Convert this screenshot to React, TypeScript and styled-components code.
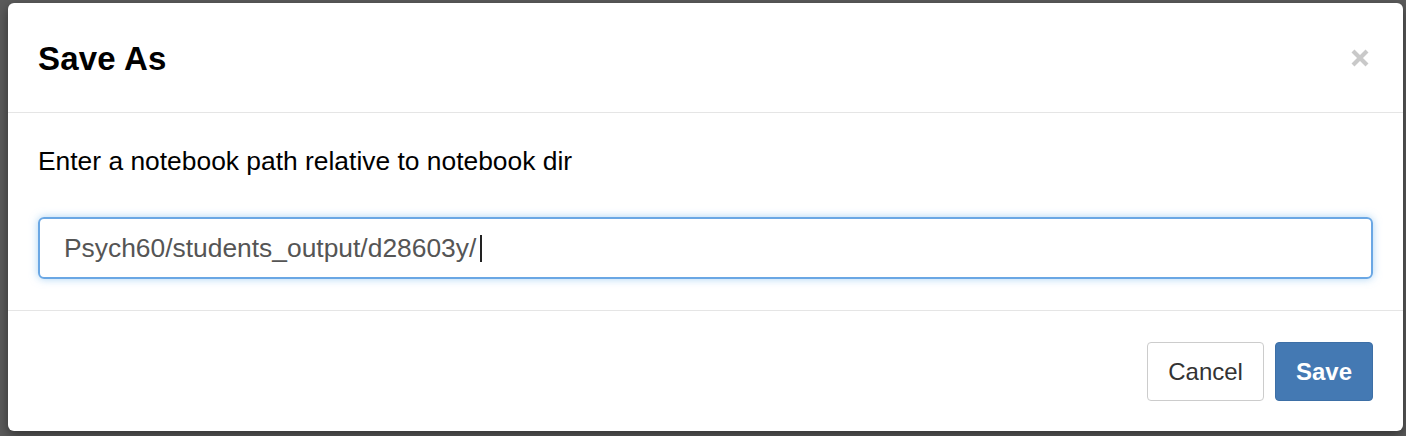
import React from "react";
import styled, { createGlobalStyle } from "styled-components";

const Global = createGlobalStyle`
  html, body {
    margin: 0;
    padding: 0;
    width: 1406px;
    height: 436px;
    overflow: hidden;
    background: #5b5b5b;
    font-family: "Liberation Sans", Arial, Helvetica, sans-serif;
  }
`;

const Backdrop = styled.div`
  width: 1406px;
  height: 436px;
  display: flex;
  align-items: flex-start;
  padding: 3px 0 0 8px;
  box-sizing: border-box;
  background: #5b5b5b;
`;

const Modal = styled.div`
  width: 1395px;
  height: 428px;
  background: #fff;
  border-radius: 6px;
  box-shadow: 0 4px 12px rgba(0, 0, 0, 0.45);
  display: flex;
  flex-direction: column;
  overflow: hidden;
`;

const Header = styled.div`
  height: 109px;
  padding: 0 30px;
  display: flex;
  align-items: center;
  justify-content: space-between;
  border-bottom: 1px solid #e5e5e5;
`;

const Title = styled.h4`
  margin: 2px 0 0;
  font-size: 33px;
  font-weight: bold;
  color: #000;
  letter-spacing: 0.2px;
`;

const Close = styled.button`
  border: none;
  background: transparent;
  padding: 0;
  margin: 0 1px 0 0;
  width: 24px;
  height: 24px;
  display: flex;
  align-items: center;
  justify-content: center;
  cursor: pointer;
`;

const Body = styled.div`
  padding: 30px 30px 31px;
  display: flex;
  flex-direction: column;
  gap: 37px;
`;

const Prompt = styled.p`
  margin: 0;
  font-size: 26.4px;
  line-height: 37px;
  color: #000;
`;

const Field = styled.div`
  height: 62px;
  box-sizing: border-box;
  border: 2px solid #6aa7e4;
  border-radius: 6px;
  box-shadow: 0 0 8px rgba(102, 175, 233, 0.55);
  padding: 0 24px;
  display: flex;
  align-items: center;
  font-size: 26.4px;
  color: #555;
`;

const Caret = styled.span`
  display: inline-block;
  width: 1.5px;
  height: 27px;
  background: #222;
  margin-left: 4px;
`;

const Footer = styled.div`
  border-top: 1px solid #e5e5e5;
  padding: 31px 30px 29px;
  display: flex;
  justify-content: flex-end;
  gap: 11px;
`;

const Button = styled.button<{ $primary?: boolean }>`
  height: 59px;
  box-sizing: border-box;
  padding: 0 20px;
  border-radius: 4px;
  font-family: "Liberation Sans", Arial, Helvetica, sans-serif;
  font-size: 24px;
  font-weight: ${(p) => (p.$primary ? "bold" : "normal")};
  color: ${(p) => (p.$primary ? "#fff" : "#333")};
  background: ${(p) => (p.$primary ? "#4479b3" : "#fff")};
  border: 1px solid ${(p) => (p.$primary ? "#3d6fa6" : "#ccc")};
  cursor: pointer;
`;

export default function App() {
  return (
    <>
      <Global />
      <Backdrop>
        <Modal>
          <Header>
            <Title>Save As</Title>
            <Close aria-label="Close">
              <svg width="20" height="20" viewBox="0 0 20 20">
                <path
                  d="M3 3 L17 17 M17 3 L3 17"
                  stroke="#c9c9c9"
                  strokeWidth="4.2"
                  strokeLinecap="butt"
                />
              </svg>
            </Close>
          </Header>
          <Body>
            <Prompt>Enter a notebook path relative to notebook dir</Prompt>
            <Field>
              Psych60/students_output/d28603y/
              <Caret />
            </Field>
          </Body>
          <Footer>
            <Button>Cancel</Button>
            <Button $primary>Save</Button>
          </Footer>
        </Modal>
      </Backdrop>
    </>
  );
}
